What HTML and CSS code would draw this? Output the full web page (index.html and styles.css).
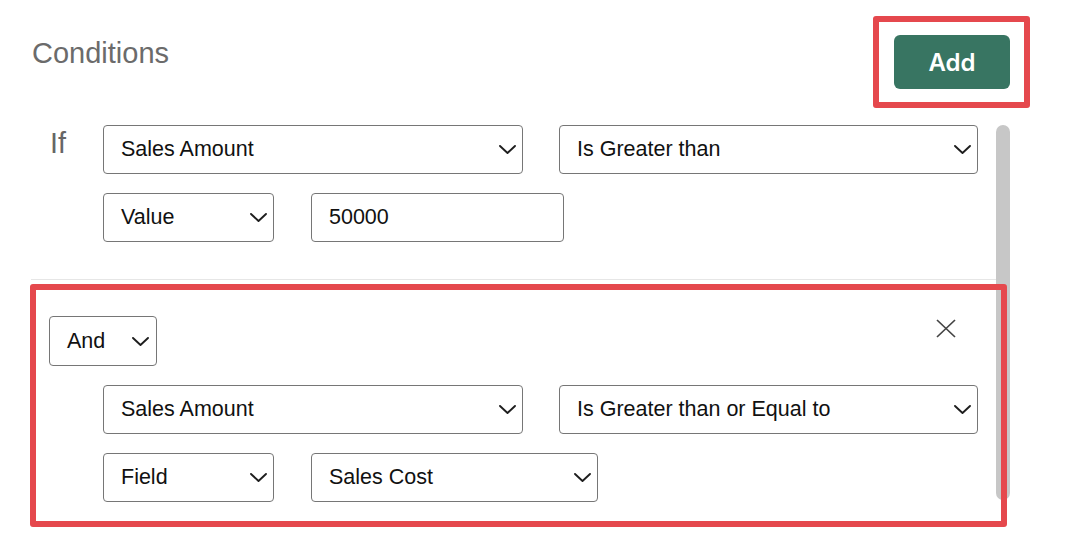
FILE: index.html
```html
<!DOCTYPE html>
<html lang="en">
<head>
<meta charset="utf-8">
<title>Conditions</title>
<link rel="stylesheet" href="styles.css">
</head>
<body>
<div class="header">
  <h2 class="title">Conditions</h2>
  <button class="add-btn" type="button">Add</button>
</div>

<div class="panel">
  <div class="content">
    <div class="group group-first">
      <div class="if-label">If</div>
      <div class="rows">
        <div class="row">
          <div class="select w-field"><span>Sales Amount</span><svg class="chev" width="17" height="9" viewBox="0 0 17 9"><polyline points="1,1 8.5,8 16,1"/></svg></div>
          <div class="select w-op"><span>Is Greater than</span><svg class="chev" width="17" height="9" viewBox="0 0 17 9"><polyline points="1,1 8.5,8 16,1"/></svg></div>
        </div>
        <div class="row row-b">
          <div class="select w-type"><span>Value</span><svg class="chev" width="17" height="9" viewBox="0 0 17 9"><polyline points="1,1 8.5,8 16,1"/></svg></div>
          <div class="input w-value"><span>50000</span></div>
        </div>
      </div>
    </div>

    <div class="group group-next">
      <div class="group-head">
        <div class="select w-join"><span>And</span><svg class="chev" width="17" height="9" viewBox="0 0 17 9"><polyline points="1,1 8.5,8 16,1"/></svg></div>
        <button class="remove" type="button" aria-label="Remove"><svg width="20" height="19" viewBox="0 0 20 19"><line x1="1" y1="1" x2="19" y2="18"/><line x1="19" y1="1" x2="1" y2="18"/></svg></button>
      </div>
      <div class="rows rows-indent">
        <div class="row">
          <div class="select w-field"><span>Sales Amount</span><svg class="chev" width="17" height="9" viewBox="0 0 17 9"><polyline points="1,1 8.5,8 16,1"/></svg></div>
          <div class="select w-op"><span>Is Greater than or Equal to</span><svg class="chev" width="17" height="9" viewBox="0 0 17 9"><polyline points="1,1 8.5,8 16,1"/></svg></div>
        </div>
        <div class="row row-b">
          <div class="select w-type"><span>Field</span><svg class="chev" width="17" height="9" viewBox="0 0 17 9"><polyline points="1,1 8.5,8 16,1"/></svg></div>
          <div class="select w-value2"><span>Sales Cost</span><svg class="chev" width="17" height="9" viewBox="0 0 17 9"><polyline points="1,1 8.5,8 16,1"/></svg></div>
        </div>
      </div>
    </div>
  </div>
  <div class="scrollbar"><div class="thumb"></div></div>
</div>

<div class="highlight highlight-add"></div>
<div class="highlight highlight-group"></div>
</body>
</html>
```

FILE: styles.css
```css
* { box-sizing: border-box; }

html, body {
  margin: 0;
  padding: 0;
  background: #ffffff;
  overflow: hidden;
}

body {
  width: 1066px;
  height: 546px;
  position: relative;
  font-family: "Liberation Sans", Arial, Helvetica, sans-serif;
  color: #111111;
}

.header {
  display: flex;
  justify-content: space-between;
  align-items: flex-start;
  padding: 35px 56px 0 32px;
}

.title {
  margin: 1px 0 0 0;
  font-size: 29px;
  line-height: 34px;
  font-weight: 400;
  color: #6b6b6b;
}

.add-btn {
  width: 116px;
  height: 54px;
  border: none;
  border-radius: 6px;
  background: #387562;
  color: #ffffff;
  font-family: Inter, "Liberation Sans", Arial, sans-serif;
  font-size: 24px;
  font-weight: 600;
  padding: 0;
  margin: 0;
}

.panel {
  display: flex;
  margin: 36px 0 0 31px;
  width: 979px;
}

.content {
  width: 965px;
}

.scrollbar {
  width: 14px;
  flex: none;
}

.thumb {
  width: 14px;
  height: 375px;
  border-radius: 7px;
  background: #c7c7c7;
}

.group-first {
  display: grid;
  grid-template-columns: 53px auto;
  padding: 0 0 37px 19px;
  border-bottom: 1px solid #e6e6e6;
}

.if-label {
  font-size: 28.8px;
  line-height: 36px;
  color: #666666;
}

.rows {
  display: flex;
  flex-direction: column;
  gap: 19px;
}

.row {
  display: flex;
  gap: 36px;
}

.row-b {
  gap: 37px;
}

.select,
.input {
  height: 49px;
  border: 1px solid #767676;
  border-radius: 4px;
  background: #ffffff;
  display: flex;
  align-items: center;
  justify-content: space-between;
  padding: 0 6px 0 17px;
  font-size: 21.5px;
  color: #111111;
  white-space: nowrap;
}

.chev {
  flex: none;
}

.chev polyline {
  fill: none;
  stroke: #1e1e1e;
  stroke-width: 1.9;
  stroke-linecap: round;
  stroke-linejoin: round;
}

.w-field { width: 420px; }
.w-op { width: 419px; }
.w-type { width: 171px; }
.w-value { width: 253px; }
.w-value2 { width: 287px; }
.w-join { width: 108px; height: 50px; padding-right: 7px; }

.group-next {
  padding: 36px 0 0 18px;
}

.group-head {
  display: flex;
  justify-content: space-between;
  align-items: flex-start;
  margin-bottom: 19px;
}

.remove {
  background: none;
  border: none;
  padding: 0;
  margin: 3px 40px 0 0;
  width: 20px;
  height: 19px;
  display: block;
}

.remove svg {
  display: block;
}

.remove line {
  stroke: #444444;
  stroke-width: 1.7;
}

.rows-indent {
  margin-left: 54px;
}

.highlight {
  position: absolute;
  border: 6.5px solid #e5484d;
  border-radius: 3px;
  pointer-events: none;
}

.highlight-add {
  left: 872.5px;
  top: 16px;
  width: 157px;
  height: 92px;
}

.highlight-group {
  left: 30px;
  top: 284px;
  width: 977px;
  height: 243px;
}
```
